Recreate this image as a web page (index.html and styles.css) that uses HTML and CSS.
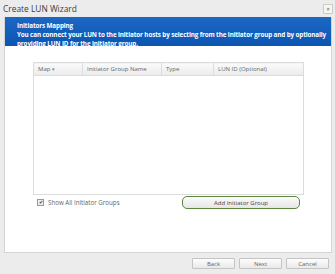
FILE: index.html
```html
<!DOCTYPE html>
<html lang="en">
<head>
  <meta charset="UTF-8">
  <meta name="viewport" content="width=device-width, initial-scale=1.0">
  <title>Create LUN Wizard</title>
  <link rel="stylesheet" href="styles.css">
</head>
<body>
  <div class="dialog">
    <!-- Judul -->
    <div class="titlebar">
      <span class="title">Create LUN Wizard</span>
      <span class="close">&#x2715;</span>
    </div>

    <!-- Isi wizard -->
    <div class="panel">
      <div class="banner">
        <div class="banner-title">Initiators Mapping</div>
        <div class="banner-text">You can connect your LUN to the initiator hosts by selecting from the initiator group and by optionally providing LUN ID for the initiator group.</div>
      </div>

      <div class="panel-body">
        <table class="map-table">
          <thead>
            <tr>
              <th class="col-map">Map <span class="caret">&#9662;</span></th>
              <th class="col-name">Initiator Group Name</th>
              <th class="col-type">Type</th>
              <th class="col-lun">LUN ID (Optional)</th>
            </tr>
          </thead>
          <tbody>
            <tr><td colspan="4"></td></tr>
          </tbody>
        </table>

        <div class="options">
          <label class="show-all">
            <span class="check">&#10004;</span>
            Show All Initiator Groups
          </label>
          <button class="add-btn">Add Initiator Group</button>
        </div>
      </div>
    </div>

    <!-- Tombol bawah -->
    <div class="footer">
      <button class="nav-btn">Back</button>
      <button class="nav-btn">Next</button>
      <button class="nav-btn">Cancel</button>
    </div>
  </div>
</body>
</html>
```

FILE: styles.css
```css
/* Dasar */
body {
  margin: 0;
  font-family: 'Open Sans', 'Liberation Sans', sans-serif;
  background-color: #ececec;
  color: #444;
}

.dialog {
  width: 335px;
  height: 274px;
  display: flex;
  flex-direction: column;
  background-color: #ececec;
}

/* Judul */
.titlebar {
  height: 17px;
  display: flex;
  align-items: center;
  justify-content: space-between;
  padding: 0 2px 0 3px;
  box-sizing: border-box;
}

.title {
  font-size: 8.4px;
  color: #3a3a3a;
}

.close {
  width: 8px;
  height: 8px;
  border: 1px solid #c8c8c8;
  border-radius: 1px;
  background-color: #f6f6f6;
  font-size: 5px;
  line-height: 8px;
  text-align: center;
  color: #666;
}

/* Panel */
.panel {
  flex: 1;
  margin: 0 3px 0 4px;
  background-color: #fff;
  border: 1px solid #d4d4d4;
  border-top: none;
  display: flex;
  flex-direction: column;
}

.banner {
  height: 29px;
  padding: 5px 4px 0 12px;
  box-sizing: border-box;
  background: linear-gradient(#1b68c4, #0c55b2);
  color: #fff;
  font-weight: bold;
  font-size: 6.3px;
  line-height: 8.8px;
  letter-spacing: -0.12px;
}

.panel-body {
  padding: 16px 28px 0 28px;
}

/* Tabel */
.map-table {
  width: 271px;
  border-collapse: collapse;
  border: 1px solid #dcdcdc;
  font-size: 6px;
  color: #666;
}

.map-table th {
  height: 12px;
  padding: 0 0 0 4px;
  text-align: left;
  font-weight: normal;
  background: linear-gradient(#fafafa, #ebebeb);
  border: 1px solid #dcdcdc;
}

.col-map { width: 44px; }
.col-name { width: 74px; }
.col-type { width: 47px; }

.caret {
  font-size: 5px;
  color: #5a7fb8;
}

.map-table td {
  height: 116px;
}

/* Opsi */
.options {
  display: flex;
  align-items: center;
  justify-content: space-between;
  padding: 1px 3px 0 4px;
}

.show-all {
  display: flex;
  align-items: center;
  gap: 4px;
  font-size: 6.2px;
  color: #666;
}

.check {
  width: 5px;
  height: 5px;
  border: 1px solid #999;
  background-color: #eee;
  font-size: 5px;
  line-height: 5px;
  text-align: center;
  color: #333;
}

.add-btn {
  width: 118px;
  height: 13px;
  padding: 0;
  border: 1.5px solid #5e8540;
  border-radius: 5px;
  background: linear-gradient(#fbfbfb, #e6e6e6);
  font-family: 'Open Sans', 'Liberation Sans', sans-serif;
  font-size: 6px;
  color: #444;
}

/* Tombol bawah */
.footer {
  height: 21px;
  display: flex;
  justify-content: flex-end;
  align-items: center;
  gap: 4px;
  padding: 0 6px 0 0;
}

.nav-btn {
  width: 43px;
  height: 11px;
  padding: 0;
  border: 1px solid #c4c4c4;
  border-radius: 1px;
  background: linear-gradient(#fdfdfd, #e9e9e9);
  font-family: 'Open Sans', 'Liberation Sans', sans-serif;
  font-size: 6px;
  color: #666;
}
```
